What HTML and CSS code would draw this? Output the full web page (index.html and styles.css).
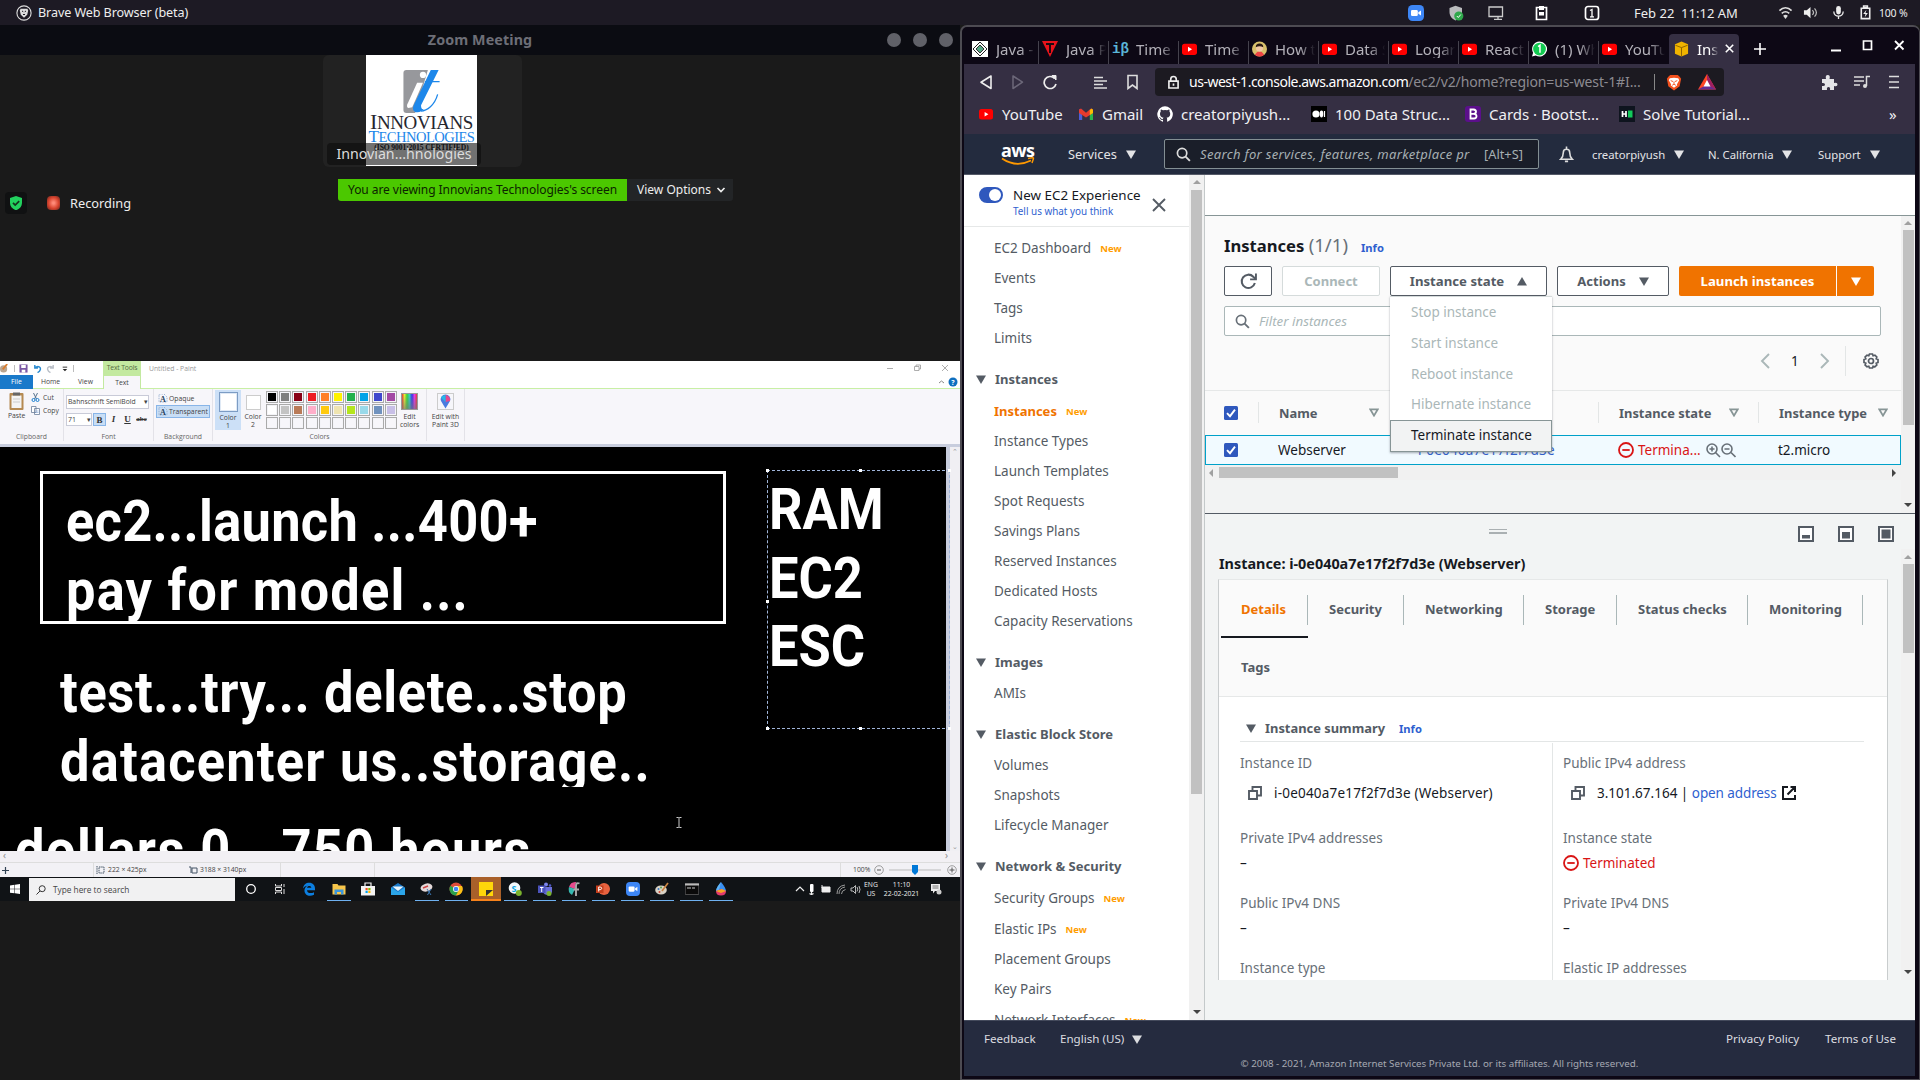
FILE: index.html
```html
<!DOCTYPE html>
<html lang="en">
<head>
<meta charset="utf-8">
<title>Desktop</title>
<link rel="stylesheet" href="styles.css">
</head>
<body>
<svg width="0" height="0" class="defs">
  <symbol id="down" viewBox="0 0 10 9"><path d="M0 .5h10L5 9z" fill="currentColor"/></symbol>
  <symbol id="up" viewBox="0 0 10 9"><path d="M0 8.5h10L5 0z" fill="currentColor"/></symbol>
  <symbol id="sort" viewBox="0 0 10 9"><path d="M1.2 1.3h7.6L5 7.6z" fill="none" stroke="currentColor" stroke-width="1.8"/></symbol>
  <symbol id="yt" viewBox="0 0 14 14"><rect y="2" width="14" height="10.5" rx="2.5" fill="#f00"/><path d="M5.6 5v4.6L9.4 7.3z" fill="#fff"/></symbol>
  <symbol id="search" viewBox="0 0 16 16"><circle cx="6.5" cy="6.5" r="5" fill="none" stroke="currentColor" stroke-width="1.8"/><path d="M10.2 10.2l4.6 4.6" stroke="currentColor" stroke-width="2"/></symbol>
  <symbol id="stop" viewBox="0 0 16 16"><circle cx="8" cy="8" r="7" fill="none" stroke="#d91515" stroke-width="1.8"/><path d="M4.3 8h7.4" stroke="#d91515" stroke-width="1.8"/></symbol>
  <symbol id="copy" viewBox="0 0 14 14"><path d="M1 5h8v8H1zM4.5 4.500V1H13v8.500H9.500" fill="none" stroke="#545b64" stroke-width="1.9"/></symbol>
  <symbol id="check" viewBox="0 0 14 14"><rect width="14" height="14" rx="1.500" fill="#2f58bd"/><path d="M3 7.200l3 3 5-6.500" fill="none" stroke="#fff" stroke-width="1.900"/></symbol>
  <symbol id="zoomcam" viewBox="0 0 16 16"><rect width="16" height="16" rx="4.500" fill="#3d86f5"/><rect x="3" y="5" width="6.800" height="6" rx="1.300" fill="#fff"/><path d="M10.300 7.300L13 5.400v5.200l-2.700-1.900z" fill="#fff"/></symbol>
  <symbol id="lens" viewBox="0 0 10 9"><path d="M1 0h5l3 3v5H1z" fill="none" stroke="#8aa6cc" stroke-width=".8" stroke-dasharray="1.500 1"/><text x="2" y="7.500" font-size="8" font-weight="700" fill="#27415f" font-family="Liberation Serif,serif">A</text></symbol>
</svg>
<div class="desktop">
  <header class="topbar">
    <svg class="brave-mini" viewBox="0 0 16 16"><circle cx="8" cy="8" r="7.100" fill="none" stroke="#ddd" stroke-width="1.100"/><path d="M4.500 3.800h7l.7 2-1 4L8 12.800 4.800 9.800l-1-4z" fill="#ddd"/><path d="M6 6l1.300.8M10 6l-1.300.8M7 9l1 1 1-1" stroke="#1d1a24" fill="none"/></svg>
    <span class="app">Brave Web Browser (beta)</span>
    <svg class="ti" viewBox="0 0 16 16"><use href="#zoomcam"/></svg>
    <svg class="ti" viewBox="0 0 16 16"><path d="M7.500.8L14 3v4c0 4-3 7-6.500 8.500C4 14 1.500 11 1.500 7V3z" fill="#b9bbbd"/><circle cx="10.800" cy="11" r="4.600" fill="#2fa84b"/><path d="M8.800 11l1.500 1.500 2.500-3" stroke="#fff" fill="none"/></svg>
    <svg class="ti" viewBox="0 0 16 16"><path d="M1 2h13.500v9.500H1zM10 11.500v2.800M6 14.300h8" fill="none" stroke="#ccc" stroke-width="1.300"/></svg>
    <svg class="ti" viewBox="0 0 16 16"><path d="M2.500 2.500h10v12h-10z" fill="none" stroke="#fff" stroke-width="1.700"/><path d="M5 1h5v4H5zM5 7h5v3.500H5z" fill="#fff"/></svg>
    <svg class="ti" viewBox="0 0 16 16"><rect x="1.500" y="1.500" width="13" height="13" rx="2.500" fill="none" stroke="#fff" stroke-width="1.700"/><path d="M6 5.500l2-1V12M6 11.800h4" fill="none" stroke="#fff" stroke-width="1.300"/></svg>
    <span class="clock">Feb 22&nbsp; 11:12 AM</span>
    <svg class="t2" viewBox="0 0 16 16"><path d="M1.500 6c4-4 9-4 13 0M4 9c2.500-2.300 5.500-2.300 8 0" fill="none" stroke="#ddd" stroke-width="1.700"/><path d="M5.500 11.500c1.500-1.300 3.500-1.300 5 0L8 14.800z" fill="#ddd"/></svg>
    <svg class="t2" viewBox="0 0 16 16"><path d="M1 5.500h3L8 2v12l-4-3.500H1z" fill="#eee"/><path d="M10 5.500c1.500 1.500 1.500 3.500 0 5M12.300 3.500c2.500 2.800 2.500 6.200 0 9" fill="none" stroke="#bbb" stroke-width="1.300"/></svg>
    <svg class="t2" viewBox="0 0 16 16"><rect x="5.500" y="1" width="5" height="9" rx="2.500" fill="#eee"/><path d="M3 7c0 6.500 10 6.500 10 0M8 12v3" fill="none" stroke="#eee" stroke-width="1.400"/></svg>
    <svg class="t2" viewBox="0 0 16 16"><path d="M3.500 3.500h9v11h-9zM6 1h4v2H6z" fill="none" stroke="#eee" stroke-width="1.700"/><path d="M9 5L5.500 9.500H8L7.200 13 10.500 8.500H8z" fill="#eee"/></svg>
    <span class="pct">100 %</span>
  </header>
  <div class="work">
    <section class="meeting">
      <div class="mtitle"><span>Zoom Meeting</span><i></i><i></i><i></i></div>
      <div class="mbody">
        <div class="tile">
          <div class="logo">
            <svg class="it" viewBox="0 0 38 44"><path d="M3 0h22L12 44H3Q0 44 0 41V3Q0 0 3 0z" fill="#97989c"/><circle cx="20" cy="5" r="3.200" fill="#fff"/><path d="M14 13h6L9 38l-4 1q-2-1-1-4z" fill="#fff"/><path d="M28 0h8L18 36q0 5 3 4-3 4-9 3-4-2-1-8z" fill="#1d87ea"/><path d="M22 11.800h15M35 25C32 36 24 42 18 42" stroke="#1d87ea" stroke-width="1.300" fill="none"/></svg>
            <b>I<small>NNOVIANS</small></b><em>T<small>ECHNOLOGIES</small></em><strong>(ISO 9001:2015 CERTIFIED)</strong>
          </div>
          <span class="who">Innovian...hnologies</span>
        </div>
        <div class="share"><span class="viewing">You are viewing Innovians Technologies's screen</span><span class="opts">View Options<svg viewBox="0 0 10 8"><path d="M1.500 2L5 5.500 8.500 2" fill="none" stroke="#eee" stroke-width="1.700"/></svg></span></div>
        <div class="rec"><span class="sh"><svg viewBox="0 0 14 14"><path d="M7 0l6 2v5c0 3.500-2.500 6-6 7.300C3.500 13 1 10.500 1 7V2z" fill="#22d15e"/><path d="M4 6.800l2.200 2.300 4-4" stroke="#16321e" stroke-width="1.700" fill="none"/></svg></span><span class="dot"></span>Recording</div>
      </div>
      <div class="paint">
        <div class="ptitle">
          <div class="quick">
            <svg viewBox="0 0 10 10"><circle cx="4" cy="5.500" r="4" fill="#b9a591"/><path d="M3 6l5-6" stroke="#d97d2f" stroke-width="2"/></svg><u></u>
            <svg viewBox="0 0 10 10"><path d="M.5.500h9v9h-9z" fill="#7b58a5"/><path d="M2.500 1h5v3.500h-5zM3 6.500h4v3H3z" fill="#fff"/></svg>
            <svg viewBox="0 0 10 10"><path d="M2 1v3.500h3.500M2 4.500C6 1 9 4 8 6.500Q7.500 8.500 5 9.500" fill="none" stroke="#2c8bd0" stroke-width="1.600"/></svg>
            <svg viewBox="0 0 10 10"><path d="M8 1v3.500H4.500M8 4.500C4 1 1 4 2 6.500Q2.500 8.500 5 9.500" fill="none" stroke="#b9bfc7" stroke-width="1.600"/></svg>
            <svg viewBox="0 0 10 10"><path d="M3 3.500h5" stroke="#222"/><path d="M3 5.500h5L5.500 8z" fill="#222"/></svg><u></u>
          </div>
          <div class="tt">Text Tools</div><div class="untitled">Untitled - Paint</div>
          <div class="wc"><svg viewBox="0 0 62 8"><path d="M0 4.500h6M27.500 2.500h4.500v4h-4.500zM29 2.500V1h4.500v4H32M55 1l6 6M61 1l-6 6" fill="none" stroke="#999" stroke-width=".8"/></svg></div>
        </div>
        <div class="ptabs"><span class="file">File</span><span>Home</span><span>View</span><span class="on">Text</span><div class="help"><svg viewBox="0 0 20 10"><path d="M1 6l2.500-2L6 6" fill="none" stroke="#888"/><circle cx="15" cy="5" r="4.500" fill="#0f6fbf"/><text x="13.200" y="7.500" font-size="7" fill="#fff" font-weight="700">?</text></svg></div></div>
        <div class="ribbon">
          <div class="grp clip"><div class="gb">
            <div class="paste"><svg viewBox="0 0 15 19"><rect x=".5" y="2" width="14" height="17" rx="1" fill="#b58a52"/><rect x="2.500" y="4.500" width="10" height="12.500" fill="#f4f4f4"/><path d="M4 1.500h7v3H4z" fill="#666"/><path d="M4 8h7M4 11h7" stroke="#ccc"/></svg>Paste</div>
            <div class="cc"><span><svg viewBox="0 0 9 9"><path d="M2.500 0l3 6M6.500 0l-3 6" stroke="#56738f"/><circle cx="2.500" cy="7" r="1.500" fill="none" stroke="#1b7fd0"/><circle cx="6.500" cy="7" r="1.500" fill="none" stroke="#1b7fd0"/></svg>Cut</span><span><svg viewBox="0 0 9 9"><path d="M.5.500h4.500v6H.5zM3.500 2.500h5v6h-5z" fill="#fff" stroke="#6c7f99" stroke-width=".8"/><path d="M4.500 5h3M4.500 6.500h3" stroke="#7da3d6" stroke-width=".6"/></svg>Copy</span></div>
          </div><p>Clipboard</p></div>
          <div class="grp font"><div class="fb"><div class="combo">Bahnschrift SemiBold<i>▾</i></div><div class="fr"><div class="combo size">71<i>▾</i></div><b class="bold">B</b><b><em>I</em></b><b><ins>U</ins></b><b class="abc"><s>abc</s></b></div></div><p>Font</p></div>
          <div class="grp bg"><div class="bb"><span><svg viewBox="0 0 10 9"><use href="#lens"/></svg>Opaque</span><span class="sel"><svg viewBox="0 0 10 9"><use href="#lens"/></svg>Transparent</span></div><p>Background</p></div>
          <div class="grp colors"><div class="cb">
            <div class="c1"><i></i>Color<br>1</div><div class="c2"><i></i>Color<br>2</div>
            <div class="pal">
              <i style="background:#000"></i><i style="background:#7f7f7f"></i><i style="background:#880015"></i><i style="background:#ed1c24"></i><i style="background:#ff7f27"></i><i style="background:#fff200"></i><i style="background:#22b14c"></i><i style="background:#00a2e8"></i><i style="background:#3f48cc"></i><i style="background:#a349a4"></i>
              <i style="background:#fff"></i><i style="background:#c3c3c3"></i><i style="background:#b97a57"></i><i style="background:#ffaec9"></i><i style="background:#ffc90e"></i><i style="background:#efe4b0"></i><i style="background:#b5e61d"></i><i style="background:#99d9ea"></i><i style="background:#7092be"></i><i style="background:#c8bfe7"></i>
              <i></i><i></i><i></i><i></i><i></i><i></i><i></i><i></i><i></i><i></i>
            </div>
            <div class="edit"><i class="rain"></i>Edit<br>colors</div>
          </div><p>Colors</p></div>
          <div class="grp p3d"><div class="edit"><svg viewBox="0 0 17 17"><rect x=".5" y=".5" width="16" height="16" fill="#f6f6fa" stroke="#ccc"/><path d="M8.500 15.500L4 8a4.800 4.800 0 1 1 9 0z" fill="#4a7be0"/><path d="M8.500 2a4.800 4.800 0 0 1 4.500 6L8.500 9z" fill="#e5488f"/><path d="M4 4.500L8.500 9V2Q5.500 2 4 4.500z" fill="#25b8e8"/></svg>Edit with<br>Paint 3D</div></div>
        </div>
        <div class="canvasrow">
          <div class="canvas">
            <div class="frame"></div>
            <div class="big l1">ec2...launch ...400+</div>
            <div class="big l2">pay for model ...</div>
            <div class="big l3">test...try... delete...stop</div>
            <div class="big l4">datacenter us..storage..</div>
            <div class="big l5">dollars 0...750 hours</div>
            <div class="tbox"><u></u><u></u><u></u><u></u><u></u><u></u><u></u></div>
            <div class="big r1">RAM</div><div class="big r2">EC2</div><div class="big r3">ESC</div>
            <svg class="ibeam" viewBox="0 0 6 11"><path d="M.5.500h2l.5.500.5-.5h2M3 1v9M.5 10.500h2L3 10l.5.500h2" stroke="#ccc" fill="none"/></svg>
          </div>
          <div class="vs"><span>⌃</span><span>⌄</span></div>
        </div>
        <div class="hs"><span>‹</span><span>›</span></div>
        <div class="status">
          <span><svg viewBox="0 0 9 9"><path d="M3.500 1v7M0 4.500h7" stroke="#345" stroke-width="1.200"/></svg></span><span><svg viewBox="0 0 9 9"><path d="M1 0v8M3 1h5v6H3z" fill="none" stroke="#456" stroke-dasharray="1.500 .7"/></svg>222 × 425px</span><span class="nb"><svg viewBox="0 0 9 9"><path d="M3 2h5v5H3zM0 1h2v6" fill="none" stroke="#456"/></svg>3188 × 3140px</span><span></span><span></span>
          <span class="zm">100%<svg viewBox="0 0 84 12"><circle cx="6" cy="6" r="4.300" fill="none" stroke="#888" stroke-width=".8"/><path d="M4 6h4" stroke="#555"/><path d="M16 6h52" stroke="#bbb"/><path d="M39 1h6v7l-3 3-3-3z" fill="#0078d7"/><circle cx="79" cy="6" r="4.300" fill="none" stroke="#888" stroke-width=".8"/><path d="M76.500 6h5M79 3.500v5" stroke="#555"/></svg></span>
        </div>
        <div class="taskbar">
          <div class="win"><svg viewBox="0 0 10 10"><path d="M0 1.400l4.500-.6v4H0zM5 .7l5-.7v4.800H5zM0 5.300h4.500v4L0 8.700zM5 5.300h5V10l-5-.7z" fill="#fff"/></svg></div>
          <div class="find"><svg viewBox="0 0 10 10"><circle cx="6.200" cy="3.700" r="3" fill="none" stroke="#333"/><path d="M4 6L.5 9.500" stroke="#333"/></svg>Type here to search</div>
          <div class="apps">
            <span><svg viewBox="0 0 14 14"><circle cx="7" cy="7" r="4.300" fill="none" stroke="#fff" stroke-width="1.300"/></svg></span>
            <span><svg viewBox="0 0 14 14"><path d="M2.500 2v2h6V2M2.500 12v-2h6v2M2.500 5.500h6v3h-6zM11 2v3M11 7v5" fill="none" stroke="#ddd"/></svg></span>
            <span><svg viewBox="0 0 14 14"><path d="M1 6.500C1.500 2.500 4 .7 7.200.7c3.600 0 5.800 2.500 5.800 6v1.500H5c.2 3 4 3.600 7 2v2.500c-5 2.500-10 0-9.500-5C2.800 5.500 4.500 4 6 3.500 3.500 3.800 2 5 1 6.500zM5 5.800h4.300C9.300 3.500 5.500 3.300 5 5.800z" fill="#0c7fe0"/></svg></span>
            <span class="run"><svg viewBox="0 0 14 14"><path d="M.5 2h5l1 1.500h7v9H.5z" fill="#f7c64b"/><path d="M2.500 12.500V7.500h9v5H9v-2.500H5v2.500z" fill="#3b96dc"/></svg></span>
            <span><svg viewBox="0 0 14 14"><path d="M0 4h14v9.500H0z" fill="#f3f3f3"/><path d="M4 4V1h6v3" fill="none" stroke="#f3f3f3" stroke-width="1.200"/><path d="M4.500 6h2.200v2.200H4.500z" fill="#f25022"/><path d="M7.300 6h2.200v2.200H7.300z" fill="#7fba00"/><path d="M4.500 8.800h2.200V11H4.500z" fill="#00a4ef"/><path d="M7.300 8.800h2.200V11H7.300z" fill="#ffb900"/></svg></span>
            <span><svg viewBox="0 0 14 14"><path d="M0 5.500L7 1l7 4.500V13H0z" fill="#1a79c9"/><path d="M1.500 4.500h11L7 9z" fill="#e8f4fb"/><path d="M0 5.500L7 10l7-4.500V13H0z" fill="#2ba6ea"/></svg></span>
            <span class="run"><svg viewBox="0 0 14 14"><ellipse cx="6.500" cy="5.500" rx="6" ry="4" fill="#e5dada" transform="rotate(-15 6.500 5.500)"/><path d="M3 6l5-2" stroke="#c44" stroke-width="1.500"/><path d="M7 7l4 6M11 7l-3.500 6" stroke="#3c78b4"/></svg></span>
            <span class="run"><svg viewBox="0 0 14 14"><circle cx="7" cy="7" r="6.500" fill="#dd4b3a"/><path d="M7 7L1.400 3.700A6.500 6.500 0 0 0 7 13.500L10 8z" fill="#2ba24c"/><path d="M7 4h6a6.500 6.500 0 0 1-6 9.500L10 8z" fill="#fbc116"/><circle cx="7" cy="7" r="3" fill="#fff"/><circle cx="7" cy="7" r="2.300" fill="#4285f4"/></svg></span>
            <span class="run sticky"><svg viewBox="0 0 14 14"><path d="M0 0h14v14H0z" fill="#ffd60a"/><path d="M7 14V8h7z" fill="#333"/></svg></span>
            <span class="run"><svg viewBox="0 0 14 14"><circle cx="6.500" cy="6" r="5.800" fill="#f2f8fb"/><text x="3.500" y="9.500" font-size="9" font-weight="700" fill="#0aa5e3">S</text><circle cx="10.800" cy="11" r="3" fill="#7ab32e"/></svg></span>
            <span class="run"><svg viewBox="0 0 14 14"><circle cx="8" cy="2.500" r="2" fill="#7b83eb"/><circle cx="12" cy="3.500" r="1.300" fill="#5059c9"/><path d="M5 5h9v5q-1 3-4 3-4 0-5-3z" fill="#6a70d8"/><path d="M0 3.500h7.500V11H0z" fill="#4b53bc"/><path d="M2 5.500h3.500M3.700 5.500V10" stroke="#fff"/><circle cx="11" cy="11.500" r="2.500" fill="#7ab32e"/></svg></span>
            <span class="run"><svg viewBox="0 0 14 14"><path d="M9 0A7 7 0 0 0 2 5l6 2z" fill="#e64a8c"/><path d="M2 5a7 7 0 0 0 3 8l3-6z" fill="#35b8b0"/><path d="M12.500 1.500Q9 0 9 4v10M6.500 7.500h5.500" stroke="#aaa" stroke-width="1.900" fill="none"/></svg></span>
            <span class="run"><svg viewBox="0 0 14 14"><circle cx="8" cy="7" r="6" fill="#e8623f"/><path d="M0 3.500h7.500V11H0z" fill="#c43e1c"/><path d="M2.700 9.500V5h1.500q1.500.2 1.500 1.300T4.200 7.700H2.700" stroke="#fff" fill="none"/></svg></span>
            <span class="run"><svg viewBox="0 0 16 16"><use href="#zoomcam"/></svg></span>
            <span class="run"><svg viewBox="0 0 14 14"><ellipse cx="6" cy="8" rx="5.800" ry="4.500" fill="#d9d2c5"/><circle cx="3.500" cy="7" r="1" fill="#3a79c4"/><circle cx="6" cy="5.500" r="1" fill="#58a045"/><circle cx="4.500" cy="10" r="1" fill="#c43"/><path d="M7 9l6-8" stroke="#c98442" stroke-width="1.700"/></svg></span>
            <span class="run"><svg viewBox="0 0 14 14"><path d="M.3 1.500h13.400v11H.3z" fill="#0a0a0a" stroke="#777" stroke-width=".6"/><path d="M0 1.500h14v2H0z" fill="#bbb"/><path d="M2 6h4M7 6h3" stroke="#ccc"/></svg></span>
            <span class="run"><svg viewBox="0 0 14 14"><path d="M7 0Q12 6 12 9H2q0-3 5-9z" fill="#3a8ff0"/><path d="M7 0Q2 6 2 9l3-1z" fill="#5fb4f5"/><path d="M2 9q0 4.500 5 4.500T12 9L7 7z" fill="#e33a6d"/><path d="M2 9l6-2 4 2-5 2z" fill="#f5a623"/></svg></span>
          </div>
          <div class="tray"><svg viewBox="0 0 66 14"><path d="M1 9l4-4 4 4M16.500 10v3M14.500 11.500q2 1.500 4 0" fill="none" stroke="#eee" stroke-width="1.200"/><rect x="15" y="2" width="3.500" height="8" rx="1" fill="#fff"/><path d="M27 5h8v5h-8zM27 3v3" fill="#eee" stroke="#eee"/><path d="M44 12q0-6 6-7M46.500 12q0-3.500 4-4.500M42 12q0-8 8-9" fill="none" stroke="#aaa" stroke-width=".9"/><path d="M56 6h2l2.500-2.500v8L58 9h-2zM62 5q1.500 2 0 4.500M64 4q2 3.500 0 7" fill="none" stroke="#ccc" stroke-width=".9"/></svg><span>ENG<br>US</span><span class="time">11:10<br>22-02-2021</span><svg class="note" viewBox="0 0 12 12"><path d="M1 1h9v7H5l-2 2.500V8H1z" fill="#eee"/><path d="M2.500 3h6M2.500 5h6" stroke="#555" stroke-width=".8"/><circle cx="9" cy="9" r="2.500" fill="#ccc"/></svg></div>
        </div>
      </div>
    </section>

    <section class="browser">
      <div class="tabs">
        <div class="tab"><svg viewBox="0 0 16 16"><path d="M0 0h16v16H0z" fill="#fff"/><path d="M8 1l7 7-7 7-7-7z" fill="none" stroke="#222"/><path d="M8 4l4 4-4 4-4-4z" fill="#5aa888" stroke="#333"/></svg><span>Java - J</span></div>
        <div class="tab"><svg viewBox="0 0 16 16"><path d="M0 0h16L8 16z" fill="#e8131b"/><path d="M4 3h8M8 3v9" stroke="#1c0a10" stroke-width="2"/></svg><span>Java Pr</span></div>
        <div class="tab"><div class="ib">iβ</div><span>Time Co</span></div>
        <div class="tab"><svg viewBox="0 0 14 14"><use href="#yt"/></svg><span>Time Co</span></div>
        <div class="tab"><svg viewBox="0 0 16 16"><circle cx="8" cy="8" r="8" fill="#d9c16c"/><path d="M3 14q5-7 10 0-5 4-10 0z" fill="#e44"/><circle cx="8" cy="7" r="3.800" fill="#f2c9a5"/><path d="M4 6q0-4 4-4t4 4q-4-2-8 0z" fill="#2b1a14"/></svg><span>How to</span></div>
        <div class="tab"><svg viewBox="0 0 14 14"><use href="#yt"/></svg><span>Data St</span></div>
        <div class="tab"><svg viewBox="0 0 14 14"><use href="#yt"/></svg><span>Logarit</span></div>
        <div class="tab"><svg viewBox="0 0 14 14"><use href="#yt"/></svg><span>React JS</span></div>
        <div class="tab"><svg viewBox="0 0 16 16"><path d="M8 0a8 8 0 1 1-4 14.900L0 16l1.200-4A8 8 0 0 1 8 0z" fill="#fff"/><circle cx="8" cy="8" r="6.800" fill="#13ca51"/><path d="M6.500 5.500L8.500 4v8" stroke="#fff" stroke-width="1.600" fill="none"/></svg><span>(1) Wha</span></div>
        <div class="tab last"><svg viewBox="0 0 14 14"><use href="#yt"/></svg><span>YouTub</span></div>
        <div class="tab active"><svg viewBox="0 0 16 16"><path d="M8 0l7 3v10l-7 3-7-3V3z" fill="#f0b400"/><path d="M1.500 4L8 6.500 14.500 4M8 6.500V16" stroke="#8a6100" fill="none"/></svg><span>Inst</span><svg class="x" viewBox="0 0 8 8"><path d="M.7.700l6.600 6.600M7.300.700L.7 7.300" stroke="#fff" stroke-width="1.400"/></svg></div>
        <svg class="plus" viewBox="0 0 12 12"><path d="M6 0v12M0 6h12" stroke="#fff" stroke-width="1.600"/></svg>
        <svg class="wctl" viewBox="0 0 75 14"><path d="M0 11.500h10" stroke="#fff" stroke-width="2"/><path d="M32.500 2h8v8.500h-8z" fill="none" stroke="#fff" stroke-width="1.700"/><path d="M64 2l8.500 8.500M72.500 2L64 10.500" stroke="#fff" stroke-width="1.800"/></svg>
      </div>
      <div class="tools">
        <svg class="nav" viewBox="0 0 160 16"><path d="M13 2v12.500L3 8.200z" fill="none" stroke="#eee" stroke-width="1.600" stroke-linejoin="round"/><path d="M35 2v12.500L44.500 8.200z" fill="none" stroke="#6c6879" stroke-width="1.500" stroke-linejoin="round"/><path d="M76.500 4.300A6 6 0 1 0 78 10" fill="none" stroke="#eee" stroke-width="1.700"/><path d="M74 1.500h4v4.500z" fill="#eee" stroke="#eee"/><path d="M116 3.500h9M116 7h13M116 10.500h9M116 14h13" stroke="#ddd" stroke-width="1.400"/><path d="M150 1.500h9v13L154.500 11 150 14.500z" fill="none" stroke="#ddd" stroke-width="1.600"/></svg>
        <div class="url"><svg class="lock" viewBox="0 0 12 14"><path d="M1 6h10v7.500H1z" fill="none" stroke="#eee" stroke-width="1.800"/><path d="M3 6V4q0-3 3-3t3 3v2M6 8.500v2.500" fill="none" stroke="#eee" stroke-width="1.800"/></svg><span><b>us-west-1.console.aws.amazon.com</b>/ec2/v2/home?region=us-west-1#I...</span><i></i><svg class="br" viewBox="0 0 16 18"><path d="M4 1h8l2 2 1.500 2L14 13l-6 4.500L2 13 .5 5 2 3z" fill="#f4511e"/><path d="M3.500 4.500L8 4l4.500.5 1 2-2.500 4.500.5 1L8 14.500 4.500 12l.5-1-2.500-4.500z" fill="#fff"/><path d="M4.500 7l2.500 1M11.500 7L9 8M8 8v2.500M6 12l2-1.300 2 1.300" stroke="#f4511e" fill="none"/></svg><svg class="bat" viewBox="0 0 18 16"><path d="M9 0l9 15.500H0z" fill="#ff4724"/><path d="M9 0l9 15.500-9-4z" fill="#9e1f63"/><path d="M0 15.500l9-5 9 5z" fill="#662d91"/><path d="M9 6l3.500 6.500h-7z" fill="#fff"/></svg></div>
        <svg class="ext" viewBox="0 0 80 16"><path d="M1 5h4q-1-4 1.800-4T8.500 5H13v4q3.500-1 3.500 1.500T13 12v4H9q.5-3-1.500-3T6 16H1v-4q3 .5 3-1.500T1 9z" fill="#e4e4e8"/><path d="M33 3h10M33 7h10M33 11h6M45.500 12V2.500H49" fill="none" stroke="#ddd" stroke-width="1.500"/><circle cx="44" cy="12" r="2" fill="#ddd"/><path d="M68 2.500h10M68 8h10M68 13.500h10" stroke="#ddd" stroke-width="1.600"/></svg>
      </div>
      <div class="marks">
        <span><svg viewBox="0 0 14 14"><use href="#yt"/></svg>YouTube</span>
        <span><svg viewBox="0 0 14 14"><path d="M0 2.500h3.200V13H0z" fill="#4c5fd8"/><path d="M10.800 2.500H14V13h-3.200z" fill="#2cb54c"/><path d="M0 2.500l2-1 5 4.200 5-4.200 2 1V6L7 10.500 0 6z" fill="#e63a2e"/><path d="M10.800 3l2-1.500L14 3v3l-3.200 2z" fill="#fbbc04"/></svg>Gmail</span>
        <span><svg viewBox="0 0 16 16"><path d="M8 .2a8 8 0 0 0-2.500 15.500c.4 0 .5-.2.500-.4v-1.500c-2.300.5-2.800-1-2.800-1-.3-.9-.8-1.200-.8-1.200-.8-.5 0-.5 0-.5.800.1 1.200.9 1.200.9.800 1.300 2 .9 2.400.7.100-.5.300-.9.500-1.100C4.800 11.400 3 10.700 3 7.700c0-.9.300-1.600.8-2.200-.1-.2-.4-1 .1-2.100 0 0 .7-.2 2.200.8a7.400 7.400 0 0 1 4 0c1.500-1 2.200-.8 2.200-.8.400 1.100.2 1.900.1 2.100.5.600.8 1.300.8 2.200 0 3.100-1.900 3.700-3.600 3.900.3.300.5.800.5 1.500v2.200c0 .2.100.5.500.4A8 8 0 0 0 8 .2z" fill="#fff"/></svg>creatorpiyush...</span>
        <span><svg viewBox="0 0 16 16"><path d="M0 0h16v16H0z" fill="#000"/><circle cx="5" cy="8" r="3.600" fill="#fff"/><ellipse cx="10.500" cy="8" rx="1.800" ry="3.400" fill="#fff"/><path d="M13.500 5v6" stroke="#fff" stroke-width="1.200"/></svg>100 Data Struc...</span>
        <span><svg viewBox="0 0 16 16"><rect width="16" height="16" rx="3" fill="#5b0f8b"/><path d="M5.500 3.500h3q2.500.2 2.500 2.200T8.500 7.800h-3 3.500q2.500.2 2.500 2.400T9 12.500H5.500z" fill="none" stroke="#fff" stroke-width="1.800"/></svg>Cards · Bootst...</span>
        <span><svg viewBox="0 0 16 16"><path d="M0 0h16v16H0z" fill="#0e141e"/><path d="M3.500 5v6M7 5v6M3.500 8H7" stroke="#fff" stroke-width="1.700"/><path d="M9 4.500h4.500v7H9z" fill="#12c95a"/></svg>Solve Tutorial...</span>
        <span class="more">»</span>
      </div>
      <div class="aws">
        <div class="awslogo"><span>aws</span><svg viewBox="0 0 34 9"><path d="M1 1.500Q15 11 30 3.500" fill="none" stroke="#f90" stroke-width="1.800"/><path d="M27 1.500q6-1.500 5.500 0T31 6" fill="none" stroke="#f90" stroke-width="1.400"/></svg></div>
        <div class="serv">Services<svg viewBox="0 0 10 9"><use href="#down"/></svg></div>
        <div class="srch"><svg viewBox="0 0 16 16"><use href="#search"/></svg><em>Search for services, features, marketplace pr</em><span>[Alt+S]</span></div>
        <svg class="bell" viewBox="0 0 14 16"><path d="M1.500 12.500Q4 10 4 6q0-3 3-3t3 3q0 4 2.500 6.500zM7 .5V3M5.500 14.500h3" fill="none" stroke="#ddd" stroke-width="1.500"/></svg>
        <div class="acct">creatorpiyush<svg viewBox="0 0 10 9"><use href="#down"/></svg></div>
        <div class="acct a2">N. California<svg viewBox="0 0 10 9"><use href="#down"/></svg></div>
        <div class="acct a3">Support<svg viewBox="0 0 10 9"><use href="#down"/></svg></div>
      </div>
      <div class="page">
        <nav class="side">
          <div class="exp"><i class="toggle"></i><div><strong>New EC2 Experience</strong><a>Tell us what you think</a></div><svg viewBox="0 0 14 14"><path d="M1 1l12 12M13 1L1 13" stroke="#545b64" stroke-width="1.900"/></svg></div>
          <ul>
            <li class="n">EC2 Dashboard<sup>New</sup></li><li>Events</li><li>Tags</li><li>Limits</li>
            <li class="h"><svg viewBox="0 0 10 9"><use href="#down"/></svg>Instances</li>
            <li class="n cur">Instances<sup>New</sup></li><li>Instance Types</li><li>Launch Templates</li><li>Spot Requests</li><li>Savings Plans</li><li>Reserved Instances</li><li>Dedicated Hosts</li><li>Capacity Reservations</li>
            <li class="h"><svg viewBox="0 0 10 9"><use href="#down"/></svg>Images</li><li>AMIs</li>
            <li class="h"><svg viewBox="0 0 10 9"><use href="#down"/></svg>Elastic Block Store</li><li>Volumes</li><li>Snapshots</li><li>Lifecycle Manager</li>
            <li class="h"><svg viewBox="0 0 10 9"><use href="#down"/></svg>Network &amp; Security</li>
            <li class="n">Security Groups<sup>New</sup></li><li class="n">Elastic IPs<sup>New</sup></li><li>Placement Groups</li><li>Key Pairs</li><li class="n">Network Interfaces<sup>New</sup></li>
          </ul>
        </nav>
        <div class="sb sb1"><b></b><i></i><u></u></div>
        <main>
          <div class="flash"></div>
          <div class="upper">
            <div class="list">
              <div class="lhead">
                <h1>Instances <span>(1/1)</span><a>Info</a></h1>
                <div class="btns">
                  <div class="btn"><svg class="rf" viewBox="0 0 16 16"><path d="M14 9.500A6.300 6.300 0 1 1 12.500 3.500L14.500 5.500" fill="none" stroke="#545b64" stroke-width="1.900"/><path d="M15 .5V6H9.500" fill="none" stroke="#545b64" stroke-width="1.800"/></svg></div>
                  <div class="btn off">Connect</div>
                  <div class="btn st">Instance state<svg viewBox="0 0 10 9"><use href="#up"/></svg>
                    <div class="menu"><span>Stop instance</span><span>Start instance</span><span>Reboot instance</span><span>Hibernate instance</span><span class="hot">Terminate instance</span></div>
                  </div>
                  <div class="btn">Actions<svg viewBox="0 0 10 9"><use href="#down"/></svg></div>
                  <div class="launch"><span>Launch instances</span><span><svg viewBox="0 0 10 9"><use href="#down"/></svg></span></div>
                </div>
                <div class="filter"><svg viewBox="0 0 16 16"><use href="#search"/></svg><em>Filter instances</em></div>
                <div class="pager"><svg viewBox="0 0 70 16"><path d="M9 1L2 8l7 7M61 1l7 7-7 7" fill="none" stroke="#aab7b8" stroke-width="1.900"/><text x="31" y="12.800" font-size="13.500" fill="#16191f">1</text></svg><i></i><svg class="gear" viewBox="0 0 16 16"><path d="M6.500 1h3l.6 1.700 1.800-.6 1.900 1.900-.6 1.800L15 6.500v3l-1.800.7.600 1.800-1.900 1.900-1.800-.6L9.500 15h-3l-.7-1.700-1.800.6L2.100 12l.7-1.800L1 9.500v-3l1.800-.7L2.100 4 4 2.100l1.800.6z" fill="none" stroke="#545b64" stroke-width="1.700"/><circle cx="8" cy="8" r="2.500" fill="none" stroke="#545b64" stroke-width="1.700"/></svg></div>
              </div>
              <div class="row th"><svg viewBox="0 0 14 14"><use href="#check"/></svg><span class="l">Name<svg viewBox="0 0 10 9"><use href="#sort"/></svg></span><span></span><span class="l">Instance state<svg viewBox="0 0 10 9"><use href="#sort"/></svg></span><span class="l">Instance type<svg viewBox="0 0 10 9"><use href="#sort"/></svg></span></div>
              <div class="row td"><svg viewBox="0 0 14 14"><use href="#check"/></svg><span class="w">Webserver</span><a>i-0e040a7e17f2f7d3e</a><span class="red"><svg viewBox="0 0 16 16"><use href="#stop"/></svg>Termina...<svg class="mag" viewBox="0 0 30 15"><circle cx="6" cy="6" r="5" fill="none" stroke="#687078" stroke-width="1.600"/><path d="M3.500 6h5M6 3.500v5M9.500 9.500l4.500 4.500M18.500 6h5M25 9.500l4.500 4.500" stroke="#687078" stroke-width="1.600"/><circle cx="21" cy="6" r="5" fill="none" stroke="#687078" stroke-width="1.600"/></svg></span><span class="ty">t2.micro</span></div>
              <div class="hbar"><b></b><i></i><u></u></div>
            </div>
            <div class="sb sb2"><b></b><i></i><u></u></div>
          </div>
          <div class="split">
            <div class="grip"><i></i><svg viewBox="0 0 96 16"><path d="M1 1h14v14H1zM41 1h14v14H41zM81 1h14v14H81z" fill="#fff" stroke="#545b64" stroke-width="2"/><path d="M4 9h8v3.500H4zM44 6h8v6.500h-8zM83.500 3.500h9v9h-9z" fill="#545b64"/></svg></div>
            <div class="lower">
              <div class="det">
                <h2>Instance: i-0e040a7e17f2f7d3e (Webserver)</h2>
                <div class="card">
                  <div class="dtabs"><span class="on">Details</span><span>Security</span><span>Networking</span><span>Storage</span><span>Status checks</span><span>Monitoring</span><span class="tg">Tags</span></div>
                  <div class="sum"><svg viewBox="0 0 10 9"><use href="#down"/></svg><b>Instance summary</b><a>Info</a></div>
                  <div class="cols">
                    <dl><dt>Instance ID</dt><dd class="v"><svg viewBox="0 0 14 14"><use href="#copy"/></svg><span class="id">i-0e040a7e17f2f7d3e (Webserver)</span></dd><dt>Private IPv4 addresses</dt><dd>–</dd><dt>Public IPv4 DNS</dt><dd>–</dd><dt>Instance type</dt></dl>
                    <dl><dt>Public IPv4 address</dt><dd class="v"><svg viewBox="0 0 14 14"><use href="#copy"/></svg>3.101.67.164 |&nbsp;<a>open address</a><svg class="out" viewBox="0 0 14 14"><path d="M6 1H1v12h12V9M8.500 1H13v5M13 1L5.500 8.500" fill="none" stroke="#16191f" stroke-width="2"/></svg></dd><dt>Instance state</dt><dd class="red"><svg viewBox="0 0 16 16"><use href="#stop"/></svg>Terminated</dd><dt>Private IPv4 DNS</dt><dd>–</dd><dt>Elastic IP addresses</dt></dl>
                  </div>
                </div>
              </div>
              <div class="sb sb3"><b></b><i></i><u></u></div>
            </div>
          </div>
        </main>
      </div>
      <footer><div class="f1"><span>Feedback</span><span>English (US)<svg viewBox="0 0 10 9"><use href="#down"/></svg></span><span class="pp">Privacy Policy</span><span>Terms of Use</span></div><div class="f2">© 2008 - 2021, Amazon Internet Services Private Ltd. or its affiliates. All rights reserved.</div></footer>
    </section>
  </div>
</div>
</body>
</html>
```
FILE: styles.css
```css
*{box-sizing:border-box;margin:0;padding:0}
body{background:#1a1a1a;font-family:"Noto Sans","Open Sans",sans-serif;font-size:13.5px;color:#16191f}
svg{display:block;flex:none}
i,em{font-style:normal}
ul{list-style:none}
.defs{position:absolute}
.desktop{width:1920px;height:1080px;display:flex;flex-direction:column;overflow:hidden;white-space:nowrap}

/* system bar */
.topbar{height:25px;background:#1d1a24;color:#eee;display:grid;align-items:center;grid-template-columns:38px 1370px 40px 40px 46px 50px 50px 144px 25px 28px 27px 21px 1fr}
.brave-mini{width:16px;height:16px;justify-self:end;margin-right:6px}
.app{font-size:12.6px;letter-spacing:-.1px}
.ti,.t2{width:16px;height:16px}
.t2{width:15px;height:15px}
.clock{font-size:13px}
.pct{font-size:10.5px;letter-spacing:-.2px}
.work{display:flex;height:1055px}

/* meeting window */
.meeting{width:960px;background:#1a1a1a;display:flex;flex-direction:column}
.mtitle{height:30px;background:#0b0c12;display:flex;align-items:center;gap:12px;padding-right:7px}
.mtitle span{flex:1;text-align:center;padding:0 0 2px 85px;font-weight:700;font-size:14.3px;letter-spacing:.1px;color:#6d6e77}
.mtitle i{width:14px;height:14px;border-radius:50%;background:#606168}
.mbody{height:306px}
.tile{width:199px;height:112px;margin-left:323px;background:#222;border-radius:6px;position:relative;padding-left:43px}
.logo{width:111px;height:111px;background:#fff;display:flex;flex-direction:column;align-items:center;padding-top:15px;font-family:"Liberation Serif",serif;line-height:1}
.it{width:38px;height:43px}
.logo b,.logo em{font-weight:400;font-size:22px;height:17px;line-height:17px;color:#26262e;letter-spacing:-.4px}
.logo b small{font-size:19px}
.logo em{font-size:17px;height:13px;line-height:13px;color:#1d87ea;letter-spacing:-.5px}
.logo em small{font-size:14.500px}
.logo strong{font-size:7.600px;margin-top:1px;letter-spacing:-.1px}
.who{position:absolute;left:4px;top:88px;width:154px;height:22px;border-radius:4px;background:rgba(10,10,10,.58);color:#ddd;font-size:14.2px;line-height:21px;text-align:center}
.share{display:flex;margin:12px 0 0 338px;height:22px;font-size:12px;line-height:22px}
.viewing{width:289px;background:#4bc800;color:#0b2400;text-align:center;letter-spacing:-.06px;border-radius:0 0 0 3px}
.opts{width:106px;background:#232527;color:#eee;padding-left:10px;display:flex;align-items:center;gap:5px;font-size:12px;border-radius:0 0 3px}
.opts svg{width:10px;height:8px}
.rec{display:flex;align-items:center;height:22px;margin:-9px 0 0 5px;color:#eee;font-size:12.800px}
.sh{width:22px;height:22px;background:#101112;border-radius:4px;display:grid;place-items:center}
.sh svg{width:14px;height:14px}
.dot{width:13px;height:14px;margin:0 10px 0 20px;border-radius:4px;background:radial-gradient(#ff8a78 10%,#d9442e 55%,#5b2520)}

/* shared paint screen */
.paint{width:960px;height:540px;background:#fff;font-family:"Open Sans","Noto Sans",sans-serif;font-size:6.800px;color:#444;display:flex;flex-direction:column}
.ptitle{height:14px;display:flex;align-items:center}
.quick{width:103px;display:flex;align-items:center;gap:4.500px}
.quick svg{width:9px;height:9px}
.quick u{width:1px;height:7px;background:#bbb}
.tt{width:38px;height:14px;background:#c3e9a0;text-align:center;line-height:13px;letter-spacing:-.15px;color:#546b40}
.untitled{padding-left:8px;color:#999;flex:1}
.wc svg{width:62px;height:8px;margin-right:11px}
.ptabs{height:14px;display:flex;line-height:13px;border-bottom:1px solid #c8efa5;text-align:center}
.ptabs span{width:35px;height:14px}
.ptabs .file{width:33px;background:#1979ca;color:#fff}
.ptabs .on{width:38px;background:#f7f6fa;border:1px solid #c3e9a0;border-bottom:0}
.help{flex:1;display:flex;justify-content:flex-end;padding:2px 2px 0}
.help svg{width:20px;height:10px}
.ribbon{height:58px;background:#f7f6fa;border-bottom:3px solid #c8cddd;display:flex}
.grp{border-right:1px solid #e3e2e8;height:52px;padding-top:2px;display:flex;flex-direction:column;justify-content:space-between;text-align:center}
.grp p{line-height:9px;color:#666}
.clip{width:64px}.font{width:90px}.bg{width:59px}.colors{width:214px}.p3d{width:38px}
.gb{display:flex;padding-left:8px}
.paste{width:17px;line-height:11px}
.paste svg{width:15px;height:19px;margin:0 auto}
.cc{padding-left:6px}
.cc span{display:flex;align-items:center;gap:3px;height:13px}
.cc svg{width:9px;height:9px}
.fb{padding:4px 2px 0}
.combo{width:83px;height:14px;border:1px solid #c9cbd8;background:#fff;text-align:left;padding-left:1px;line-height:12px;display:flex;justify-content:space-between;letter-spacing:-.02px}
.fr{display:flex;margin-top:4px;align-items:center;gap:1px;font-family:"Liberation Serif",serif;font-size:9px}
.fr b{width:13px;height:13px;line-height:12px;color:#333}
.fr em{font-style:italic}
.fr .abc{font-size:7px}
.size{width:26px;height:13px;font-family:"Open Sans",sans-serif;font-size:7px}
.bold{background:#c9def5;border:1px solid #88b5e8}
.bb{padding:1px 0 0 2px}
.bb span{display:flex;align-items:center;height:13px;gap:1px;padding-left:1px;width:54px;border:1px solid transparent}
.bb svg{width:10px;height:9px}
.bb .sel{background:#c9def5;border-color:#88b5e8}
.cb{display:flex;line-height:8px}
.c1{width:26px;height:40px;margin:-1px 0 0 2px;background:#cce0f7;padding-top:2px}
.c1 i{display:block;width:19px;height:20px;margin:0 auto 2px;border:1px solid #7c9cc4;background:#fff;box-shadow:inset 0 0 0 1px #dfe9f5}
.c2{width:24px;padding-top:4px}
.c2 i{display:block;width:15px;height:15px;margin:0 auto 3px;border:1px solid #ccc;background:#fff}
.pal{width:132px;margin-left:1px;display:grid;grid-template-columns:repeat(10,12px);gap:1.200px;grid-auto-rows:12px}
.pal i{border:1px solid #aaa;box-shadow:inset 0 0 0 1px #f4f4f8}
.edit{padding-top:2px;line-height:8px;margin-left:2px}
.edit svg,.rain{display:block;width:17px;height:17px;margin:0 auto 3px}
.rain{border:1px solid #999;background:linear-gradient(transparent,#777a),linear-gradient(90deg,#e33,#ee3,#3d3,#3cc,#33e,#e3e,#e33)}
.p3d .edit{margin:0 -2px}
.canvasrow{height:404px;display:flex}
.canvas{width:950px;height:404px;background:#000;border-right:4px solid #c8cddd;position:relative;color:#fff}
.vs{width:10px;background:#f0eff3;display:flex;flex-direction:column;justify-content:space-between;text-align:center;color:#999}
.frame{position:absolute;left:40px;top:24px;width:686px;height:153px;border:3px solid #fff}
.big{position:absolute;font:700 57px/69px Roboto,"Noto Sans",sans-serif;transform-origin:0 0;transform:scaleX(.92)}
.l1{left:66px;top:40px;letter-spacing:.3px}.l2{left:66px;top:109px;letter-spacing:1.300px}
.l3{left:60px;top:211px;letter-spacing:.7px}.l4{left:60px;top:280px;height:60px;overflow:hidden;letter-spacing:1.300px}
.l5{left:15px;top:369px;height:35px;overflow:hidden;letter-spacing:1.500px}
.r1{left:769px;top:28px}.r2{left:769px;top:97px}.r3{left:769px;top:165px}
.tbox{position:absolute;left:767px;top:23px;width:183px;height:259px;border:1px dashed #9fb4d8}
.tbox u{position:absolute;width:3px;height:3px;background:#fff;left:-2px;top:-2px}
.tbox u:nth-child(2){left:50%}.tbox u:nth-child(3){left:180px}.tbox u:nth-child(4){top:50%}.tbox u:nth-child(5){top:256px}.tbox u:nth-child(6){top:256px;left:50%}.tbox u:nth-child(7){top:256px;left:180px}
.ibeam{position:absolute;left:676px;top:370px;width:6px;height:11px}
.hs{height:11px;background:#f2f0f4;display:flex;justify-content:space-between;padding:0 12px 0 3px;line-height:9px;color:#888;font-size:10px}
.status{height:15px;border-top:1px solid #ddd;background:#f2f1f5;display:grid;grid-template-columns:94px 94px 93px 94px 466px 1fr;align-items:center}
.status span{height:14px;line-height:14px;border-right:1px solid #ddd;display:flex;align-items:center;gap:3px;padding-left:2px}
.status span:nth-child(2){border:0}
.status .nb{padding-left:1px;gap:2px}
.status svg{width:9px;height:9px}
.status .zm{padding-left:12px;border:0}
.status .zm svg{width:84px;height:12px}
.taskbar{height:24px;background:#101316;display:flex;color:#eee}
.win{width:29px;display:grid;place-items:center}
.win svg{width:10px;height:10px}
.find{width:206px;margin-top:1px;background:#f1f1f2;color:#444;display:flex;align-items:center;gap:7px;padding-left:7px;font-size:8.300px}
.find svg{width:10px;height:10px}
.apps{display:grid;grid-template-columns:repeat(17,29.400px);width:500px;margin-left:1px}
.apps span{display:grid;place-items:center;height:24px;position:relative}
.apps svg{width:14px;height:14px}
.run::after{content:"";position:absolute;left:3px;right:3px;bottom:0;height:1px;background:#6fb1f0}
.sticky{background:#a9602a}
.sticky::after{left:0;right:0;background:#f7821b;height:2px}
.tray{display:flex;align-items:center;flex:1;margin-left:59px;font-size:6.800px;line-height:9px;text-align:center}
.tray svg{width:66px;height:14px}
.tray span{width:20px}
.tray .time{width:41px}
.tray .note{width:12px;height:12px;margin-left:8px}

/* browser window */
.browser{width:960px;background:#0d0815;border:2px solid #4d4b52;border-width:2px 1px 1px 2px;border-radius:7px 7px 0 0;padding:0 4px 3px 2px;display:flex;flex-direction:column}
.tabs{height:37px;display:flex;align-items:flex-end;padding-left:5px;flex:none}
.tab{width:70px;height:23px;border-right:1px solid #45424d;display:flex;padding:0 0 8px 3px;align-items:center;font-size:15px;color:#b3b1b9}
.tab svg{width:16px;height:16px}
.tab span{width:41px;margin-left:8px;overflow:hidden;line-height:18px;-webkit-mask:linear-gradient(90deg,#000 60%,transparent 98%)}
.tab:nth-child(n+4) svg{width:15px}
.tab.last{border:0}
.ib{width:16px;color:#5bb6d8;font-weight:700;font-size:14px;line-height:16px;font-family:"Liberation Mono","DejaVu Sans",monospace}
.tab.active{background:#352f43;height:30px;color:#fff;border:0;border-radius:4px 4px 0 0;padding:7px 0 8px 5px}
.tab.active span{width:22px;margin-left:8px}
.tab.active .x{width:9px;height:9px;margin-left:6px}
.plus{width:12px;height:12px;margin:0 65px 9px 15px}
.wctl{width:75px;height:14px;margin:0 0 11px}
.tools{height:36px;background:#352f43;display:flex;align-items:center;flex:none;padding-left:14px}
.nav{width:160px;height:16px}
.url{width:569px;height:28px;background:#1c1a21;border-radius:4px;margin-left:17px;display:flex;align-items:center;padding-left:13px;font-size:14px;color:#8c8b91}
.url b{font-weight:400;color:#fff;letter-spacing:-.490px}
.url span{width:462px;margin-left:10px;letter-spacing:-.12px;padding-bottom:1px}
.url i{width:1px;height:16px;background:#888;margin:0 11px 0 3px}
.lock{width:11px;height:14px}
.br{width:16px;height:17px}
.bat{width:18px;height:16px;margin-left:16px}
.ext{width:80px;height:16px;margin-left:97px}
.marks{height:34px;background:#352f43;color:#f0f0f3;font-size:15px;flex:none;display:grid;grid-template-columns:100px 78px 154px 154px 154px 270px 1fr;padding:0 0 6px 15px}
.marks span{display:flex;align-items:center;gap:8px}
.marks svg{width:16px;height:16px}
.marks span:nth-child(-n+2) svg{width:14px;margin-right:1px}
.aws{height:41px;background:#232b3e;border-bottom:1px solid #555a68;color:#e3e4e6;display:grid;grid-template-columns:104px 96px 395px 33px 116px 110px 1fr;align-items:center;flex:none}
.awslogo{padding-left:37px}
.awslogo span{display:block;font:700 18px/14px "Open Sans","Noto Sans",sans-serif;letter-spacing:-.6px;color:#fff}
.awslogo svg{width:34px;height:9px}
.serv{display:flex;align-items:center;gap:9px;font-size:12.800px}
.serv svg,.acct svg{width:10px;height:9px}
.srch{width:375px;height:30px;border:1px solid #838f93;border-radius:2px;background:#1a1e29;display:flex;align-items:center;padding-left:11px;color:#a7b0b3}
.srch svg{width:15px;height:15px;color:#ddd}
.srch em{width:274px;margin:0 10px 0 9px;font-style:italic;font-size:13px;overflow:hidden;letter-spacing:.33px}
.srch span{font-size:12.800px}
.bell{width:15px;height:17px}
.acct{display:flex;align-items:center;gap:9px;font-size:11.300px}
.page{height:845px;display:flex;background:#fff}
.side{width:225px;overflow:hidden}
.exp{height:52px;border-bottom:1px solid #e6e8e8;display:flex;padding:11px 0 0 15px}
.toggle{width:24px;height:16px;border-radius:8px;background:#2f58bd;border:solid #2f58bd;border-width:2px 2px 2px 10px;margin-top:1px}
.toggle::before{content:"";display:block;width:12px;height:12px;border-radius:50%;background:#fff}
.exp>div{width:129px;margin:0 10px}
.exp strong{display:block;font-weight:400;font-size:13.400px;line-height:18px}
.exp a,.lhead a,.sum a{color:#2f5fcf;font-size:11.200px}
.exp a{display:block;line-height:15px;font-size:9.900px}
.exp svg{width:14px;height:14px;margin-top:12px}
.side ul{padding-top:5px;color:#545b64}
.side li{height:30px;padding-left:30px;display:flex;align-items:center}
.side .n{height:31px}
.side .h{height:32px;margin-top:10px;font-weight:700;font-size:13px;padding-left:12px;gap:9px}
.side .h svg{width:10px;height:9px}
.side sup{font-size:9.500px;font-weight:700;color:#ff9d00;margin:2px 0 0 9px;line-height:12px}
.side .cur{color:#f07300;font-weight:700;font-size:13px}

/* scrollbars: arrow, thumb, arrow */
.sb{width:14px;background:#f1f1f1;display:flex;flex-direction:column;align-items:center;flex:none}
.sb b,.sb u,.hbar b,.hbar u{width:0;height:0;border:4px solid transparent;border-top-width:0;border-bottom:4px solid #a0a0a0}
.sb u{border-top:4px solid #444;border-bottom-width:0;margin-top:auto}
.sb i{width:11px;background:#c1c1c1}
.sb1{width:15px}.sb1 b{margin:5px 0 6px}.sb1 i{height:604px}.sb1 u{margin-bottom:6px}
main{width:711px;background:#f2f3f3;border-left:1px solid #c4c9ca;display:flex;flex-direction:column}
.flash{height:41px;background:#fff;border-bottom:1px solid #879596;flex:none}
.upper{height:297px;display:flex;flex:none}
.list{width:696px}
.lhead{height:175px;background:#fafafa;border-bottom:1px solid #e6e8e8;padding:16px 0 0 19px;display:flex;flex-direction:column}
h1{font-size:16.600px;line-height:25px;height:34px}
h1 span{font-weight:400;color:#687078;font-size:18.600px}
h1 a{font-weight:700}
.lhead a{margin-left:13px}
.btns{display:flex;gap:10px;height:30px}
.btn{height:30px;border:1px solid #545b64;border-radius:2px;background:#fff;color:#545b64;font-weight:700;font-size:13px;display:flex;align-items:center;justify-content:center;gap:13px;width:112px;position:relative}
.btn:first-child{width:48px}
.btn>svg,.launch svg{width:10px;height:9px}
.btn .rf{width:17px;height:17px}
.off{width:98px;border-color:#d5dbdb;color:#aab7b8}
.st{width:157px;font-size:13.200px}
.launch{display:flex;gap:1px;color:#fff;font-weight:700;font-size:13.200px;line-height:30px;text-align:center}
.launch span{width:157px;background:#f07300;border-radius:2px 0 0 2px}
.launch span+span{width:37px;display:grid;place-items:center;border-radius:0 2px 2px 0}
.menu{position:absolute;left:-1px;top:29px;width:162px;height:156px;background:#fff;box-shadow:0 1px 2px 0 #545b6480;z-index:5;display:flex;flex-direction:column;font-weight:400;font-size:13.500px;color:#aab7b8;border-top:1px solid #d5dbdb}
.menu span{height:31px;line-height:30px;padding-left:21px}
.menu .hot{height:32px;background:#f2f3f3;border:1px solid #879596;color:#16191f;padding-left:20px;line-height:29px}
.filter{width:657px;height:30px;margin-top:10px;background:#fff;border:1px solid #aab7b8;border-radius:2px;display:flex;align-items:center;padding-left:10px;gap:9px;color:#aab7b8}
.filter svg{width:15px;height:15px;color:#687078}
.filter em{font-style:italic;font-size:13.300px}
.pager{display:flex;align-items:center;margin:10px 0 0 536px;height:30px}
.pager svg{width:70px;height:16px}
.pager i{width:1px;height:30px;background:#e3e6e6;margin:0 17px 0 15px}
.pager .gear{width:16px;height:16px}
.row{display:grid;grid-template-columns:53px 140px 200px 160px 1fr;align-items:center}
.row>svg{width:14px;height:14px;margin-left:18px}
.th{height:44px;background:#fafafa;color:#545b64;font-weight:700;font-size:12.900px;padding-bottom:1px}
.th>svg{margin-left:19px}
.th span{height:21px;border-left:1px solid #e3e6e6;display:flex;align-items:center;justify-content:space-between;padding:0 30px 0 20px}
.th span:nth-child(2){padding-right:19px}
.th span:nth-child(3){border:0}
.th span:nth-child(4){padding-right:19px}
.th span:nth-child(5){padding-right:13px}
.th span svg{width:10px;height:9px;color:#879596}
.td{height:30px;border:1px solid #00a1c9;background:#f1faff}
.td .w{padding-left:19px}
.td a{color:#2f5fcf;padding-left:19px;letter-spacing:.2px}
.td .ty{padding-left:19px}
.red{color:#d91515;display:flex;align-items:center}
.td .red{padding-left:19px}
.red svg{width:16px;height:16px;margin-right:4px}
.td .mag{width:30px;height:15px;margin:0 0 0 5px}
.hbar{height:15px;background:#f1f1f1;display:flex;align-items:center}
.hbar b{border:4px solid transparent;border-left-width:0;border-right:4px solid #a0a0a0;margin:0 6px 0 4px}
.hbar i{width:179px;height:11px;background:#c1c1c1}
.hbar u{border:4px solid transparent;border-right-width:0;border-left:4px solid #444;margin:0 5px 0 auto}
.sb2 b{margin:5px 0 5px}.sb2 i{height:195px}.sb2 u{margin-bottom:6px}
.split{border-top:1px solid #545b64;height:507px;background:#f2f4f4}
.grip{height:35px;display:flex;align-items:center;padding:5px 0 0 284px}
.grip i{width:18px;height:5px;border:solid #aab0b2;border-width:1px 0 2px;margin:-6px 291px 0 0}
.grip svg{width:96px;height:16px}
.lower{height:431px;display:flex}
.det{width:696px;padding-left:13px;overflow:hidden}
h2{font-size:14.400px;line-height:20px;height:30px;padding:5px 0 0 1px}
.card{width:670px;height:401px;border:1px solid #c9cdce;border-top-color:#e6e8e8;border-bottom:0;background:#fff}
.dtabs{height:117px;background:#fafafa;border-bottom:1px solid #e6e8e8;display:grid;grid-template-columns:89px 96px 120px 93px 131px 115px;grid-template-rows:59px 57px;align-items:center;color:#545b64;font-weight:700;font-size:13px}
.dtabs span{border-right:1px solid #aab7b8;height:30px;line-height:28px;padding-left:21px;position:relative}
.dtabs .on{color:#f07300;padding-left:22px}
.dtabs .on::after{content:"";position:absolute;left:2px;right:-1px;top:41px;height:2px;background:#16191f}
.dtabs .tg{border:0;padding-left:22px}
.sum{height:45px;margin:0 23px 0 21px;border-bottom:1px solid #e3e6e6;padding:18px 0 0 6px;display:flex;align-items:center;color:#545b64}
.sum svg{width:10px;height:9px;margin-right:9px}
.sum b{font-size:12.900px;width:134px}
.sum a{font-weight:700}
.cols{display:grid;grid-template-columns:333px 1fr;line-height:20px;padding-top:1px}
dl{padding:10px 0 0 21px;height:238px}
dl+dl{border-left:1px solid #e3e6e6;padding-left:10px}
dt{color:#687078;height:20px}
dd{height:45px;padding-top:5px}
dd.v{height:55px;padding:10px 0 25px 8px;display:flex;align-items:center}
dd.v svg{width:14px;height:14px;margin-right:12px}
dd.v .out{margin:0 0 0 5px}
dd.v a{color:#2f5fcf;letter-spacing:-.1px}
.id{letter-spacing:.2px}
dd.red{height:45px;padding:5px 0 20px}
.sb3 b{margin:6px 0 5px}.sb3 i{height:89px}.sb3 u{margin-bottom:6px}
footer{height:56px;background:#252b3f;border-top:1px solid #444a5c;color:#dcdde0;font-size:11.600px;flex:none}
.f1{display:grid;grid-template-columns:76px 666px 99px 1fr;padding:10px 0 0 20px;line-height:16px}
.f1 span{display:flex;align-items:center;gap:8px}
.f1 svg{width:10px;height:9px}
.f1 span:nth-child(n+3){font-size:11.600px}
.f2{text-align:center;font-size:9.750px;line-height:14px;margin-top:10px;color:#a5a9b2}
```
